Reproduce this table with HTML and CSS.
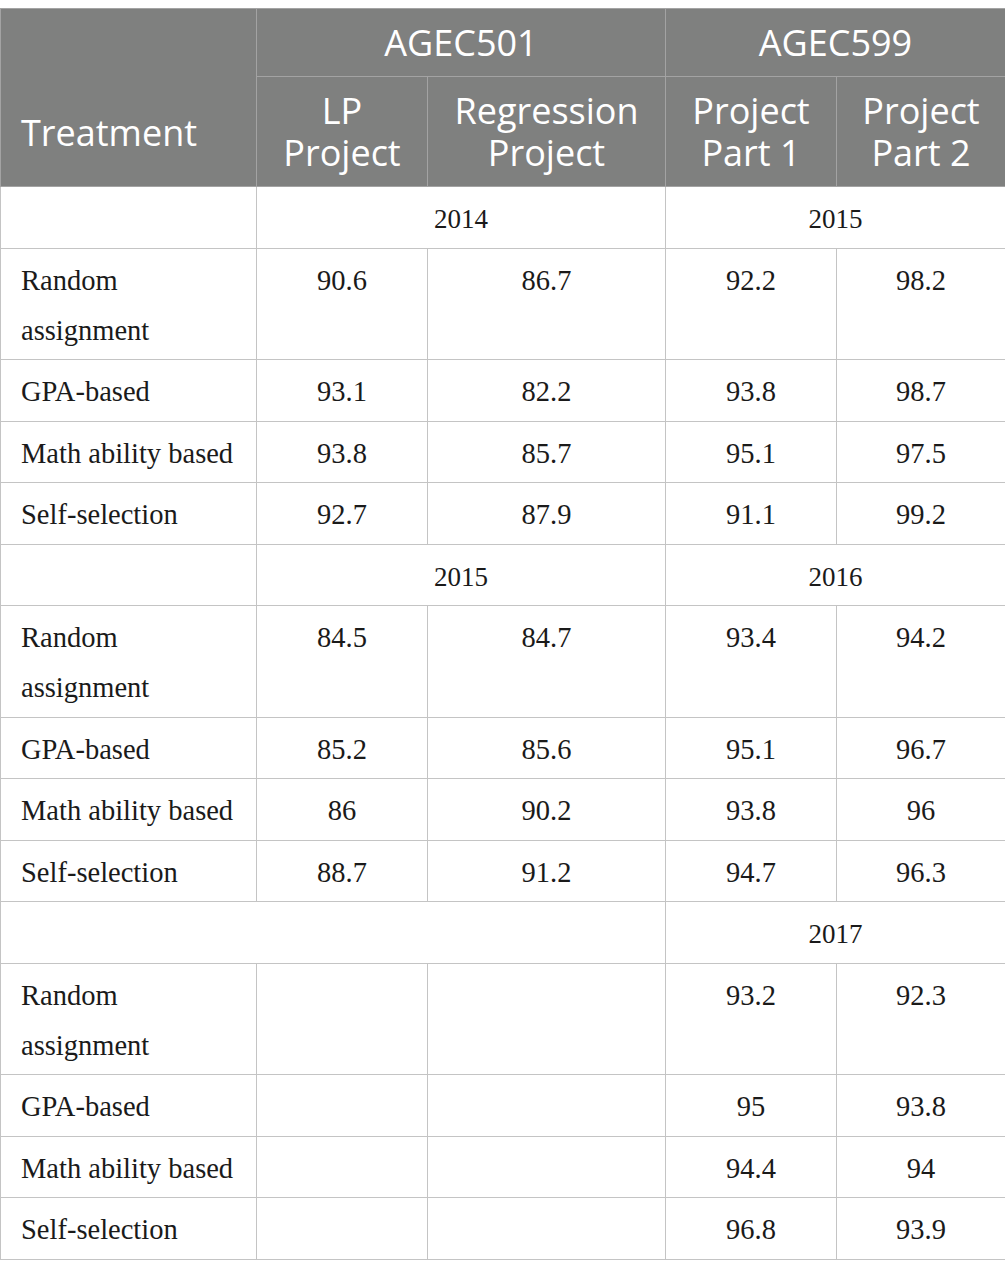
FILE: index.html
```html
<!DOCTYPE html>
<html lang="en">
<head>
    <meta charset="UTF-8">
    <title>Project scores by treatment</title>
    <link rel="stylesheet" href="styles.css">
</head>
<body>
    <table class="score-table">
        <colgroup>
            <col class="col-treat">
            <col class="col-lp">
            <col class="col-reg">
            <col class="col-p1">
            <col class="col-p2">
        </colgroup>
        <thead>
            <tr class="head-top">
                <th rowspan="2" class="treat-head">Treatment</th>
                <th colspan="2">AGEC501</th>
                <th colspan="2">AGEC599</th>
            </tr>
            <tr class="head-sub">
                <th>LP<br>Project</th>
                <th>Regression<br>Project</th>
                <th>Project<br>Part 1</th>
                <th>Project<br>Part 2</th>
            </tr>
        </thead>
        <tbody>
            <tr class="year-row">
                <td></td>
                <td colspan="2">2014</td>
                <td colspan="2">2015</td>
            </tr>
            <tr>
                <td>Random assignment</td>
                <td>90.6</td><td>86.7</td><td>92.2</td><td>98.2</td>
            </tr>
            <tr>
                <td>GPA-based</td>
                <td>93.1</td><td>82.2</td><td>93.8</td><td>98.7</td>
            </tr>
            <tr>
                <td>Math ability based</td>
                <td>93.8</td><td>85.7</td><td>95.1</td><td>97.5</td>
            </tr>
            <tr>
                <td>Self-selection</td>
                <td>92.7</td><td>87.9</td><td>91.1</td><td>99.2</td>
            </tr>

            <tr class="year-row">
                <td></td>
                <td colspan="2">2015</td>
                <td colspan="2">2016</td>
            </tr>
            <tr>
                <td>Random assignment</td>
                <td>84.5</td><td>84.7</td><td>93.4</td><td>94.2</td>
            </tr>
            <tr>
                <td>GPA-based</td>
                <td>85.2</td><td>85.6</td><td>95.1</td><td>96.7</td>
            </tr>
            <tr>
                <td>Math ability based</td>
                <td>86</td><td>90.2</td><td>93.8</td><td>96</td>
            </tr>
            <tr>
                <td>Self-selection</td>
                <td>88.7</td><td>91.2</td><td>94.7</td><td>96.3</td>
            </tr>

            <tr class="year-row">
                <td colspan="3"></td>
                <td colspan="2">2017</td>
            </tr>
            <tr>
                <td>Random assignment</td>
                <td></td><td></td><td>93.2</td><td>92.3</td>
            </tr>
            <tr>
                <td>GPA-based</td>
                <td></td><td></td><td>95</td><td>93.8</td>
            </tr>
            <tr>
                <td>Math ability based</td>
                <td></td><td></td><td>94.4</td><td>94</td>
            </tr>
            <tr>
                <td>Self-selection</td>
                <td></td><td></td><td>96.8</td><td>93.9</td>
            </tr>
        </tbody>
    </table>
</body>
</html>
```

FILE: styles.css
```css
body {
    margin: 0;
    padding: 8px 0 0;
    background: #fff;
}

.score-table {
    width: 1005px;
    border-collapse: collapse;
    table-layout: fixed;
    font-family: "Liberation Serif", "Times New Roman", serif;
    font-size: 28.5px;
    color: #1a1a1a;
}

.col-treat { width: 256px; }
.col-lp { width: 171px; }
.col-reg { width: 238px; }
.col-p1 { width: 171px; }
.col-p2 { width: 169px; }

th {
    background: #7f807f;
    color: #fff;
    font-family: "Open Sans", "Liberation Sans", sans-serif;
    font-weight: normal;
    font-size: 36px;
    line-height: 42px;
    border: 1px solid #a3a3a3;
    text-align: center;
}

.head-top th {
    height: 67px;
    padding: 0 2px;
}

.head-sub th {
    height: 109px;
    padding: 0 2px;
}

.head-top .treat-head {
    text-align: left;
    vertical-align: bottom;
    padding: 0 0 32px 20px;
}

td {
    border: 1px solid #c4c4c4;
    padding: 7px 8px 3.5px;
    line-height: 50px;
    text-align: center;
    vertical-align: top;
}

td:first-child {
    text-align: left;
    padding-left: 20px;
    padding-right: 12px;
}

.year-row td {
    text-align: center;
    font-size: 27px;
}
```
